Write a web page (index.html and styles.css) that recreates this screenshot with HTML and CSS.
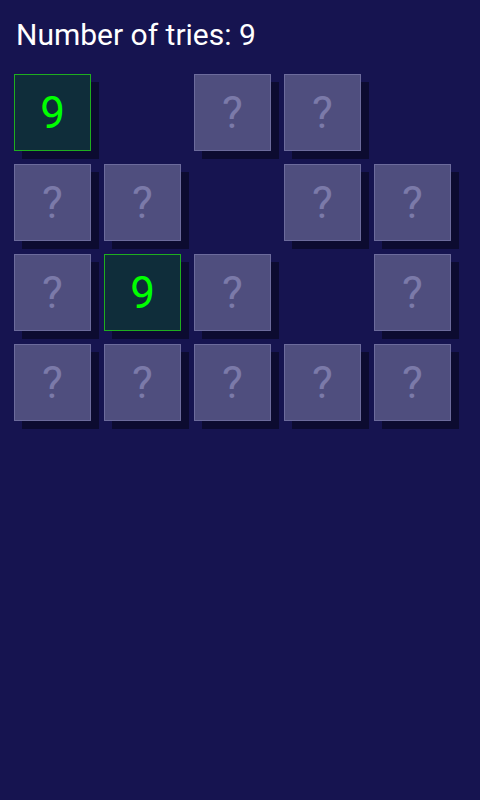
FILE: index.html
```html
<!DOCTYPE html>
<html>
<head>
<meta charset="utf-8">
<link rel="stylesheet" href="styles.css">
</head>
<body>
<div class="screen">
  <h1 class="title">Number of tries: 9</h1>
  <div class="grid">
    <div class="card open">9</div>
    <div class="cell"></div>
    <div class="card">?</div>
    <div class="card">?</div>
    <div class="cell"></div>

    <div class="card">?</div>
    <div class="card">?</div>
    <div class="cell"></div>
    <div class="card">?</div>
    <div class="card">?</div>

    <div class="card">?</div>
    <div class="card open">9</div>
    <div class="card">?</div>
    <div class="cell"></div>
    <div class="card">?</div>

    <div class="card">?</div>
    <div class="card">?</div>
    <div class="card">?</div>
    <div class="card">?</div>
    <div class="card">?</div>
  </div>
</div>
</body>
</html>
```
FILE: styles.css
```css
html, body {
  margin: 0;
  padding: 0;
  background: #161450;
}
.screen {
  width: 480px;
  height: 800px;
  background: #161450;
  font-family: Roboto, "Noto Sans", sans-serif;
  padding: 14px 0 0 14px;
  box-sizing: border-box;
}
.title {
  margin: 0 0 0 2px;
  font-weight: 400;
  font-size: 30px;
  line-height: 42px;
  color: #ffffff;
}
.grid {
  margin-top: 18px;
  display: grid;
  grid-template-columns: repeat(5, 77px);
  grid-auto-rows: 77px;
  gap: 13px;
}
.card {
  box-sizing: border-box;
  border: 1px solid #6c6b9c;
  background: #4f4e7e;
  color: #7b7aa9;
  font-size: 44px;
  display: flex;
  align-items: center;
  justify-content: center;
  box-shadow: 8px 8px 0 #0c0b30;
}
.card.open {
  border-color: #1fae1f;
  background: #0f2d3a;
  color: #00ff00;
}
```
